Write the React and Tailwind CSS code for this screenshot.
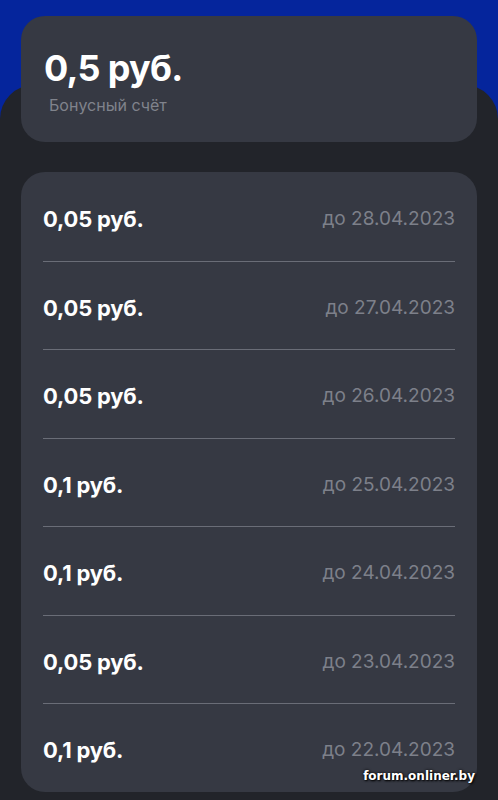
import React from "react";

const bonuses = [
  { amount: "0,05 руб.", until: "до 28.04.2023" },
  { amount: "0,05 руб.", until: "до 27.04.2023" },
  { amount: "0,05 руб.", until: "до 26.04.2023" },
  { amount: "0,1 руб.", until: "до 25.04.2023" },
  { amount: "0,1 руб.", until: "до 24.04.2023" },
  { amount: "0,05 руб.", until: "до 23.04.2023" },
  { amount: "0,1 руб.", until: "до 22.04.2023" },
];

function BonusRow({ item, last }) {
  return (
    <div className={`flex items-center justify-between pt-[32px] pb-[27.5px] ${last ? "" : "border-b border-[#6a6d77]"}`}>
      <span className="text-[22px] leading-[28px] font-bold text-white tracking-[-0.2px]">{item.amount}</span>
      <span className="text-[19px] leading-[28px] text-[#7d808a]">{item.until}</span>
    </div>
  );
}

export default function App() {
  return (
    <div
      className="relative w-[498px] h-[800px] overflow-hidden bg-[#05259c]"
      style={{ fontFamily: "Inter, 'Noto Sans', sans-serif" }}
    >
      {/* dark sheet behind the cards */}
      <div className="absolute left-0 right-0 top-[85px] bottom-0 rounded-t-[34px] bg-[#22242a]" />

      <div className="relative flex flex-col gap-[30px] px-[21px] pt-[16px]">
        <div className="h-[126px] rounded-[24px] bg-[#363943] px-[23px] pt-[30px]">
          <div className="text-[36px] leading-[44px] font-bold text-white tracking-[-0.7px]">0,5 руб.</div>
          <div className="mt-[4px] pl-[5px] text-[16px] leading-[22px] text-[#80838c]">Бонусный счёт</div>
        </div>

        <div className="rounded-[24px] bg-[#363943] px-[22px] pt-px">
          {bonuses.map((b, i) => (
            <BonusRow key={i} item={b} last={i === bonuses.length - 1} />
          ))}
        </div>
      </div>

      <div
        className="absolute right-[23px] bottom-[15px] text-[12px] font-bold text-white"
        style={{ fontFamily: "'DejaVu Sans', sans-serif", textShadow: "1px 1px 2px #000, 0 0 3px #000" }}
      >
        forum.onliner.by
      </div>
    </div>
  );
}
